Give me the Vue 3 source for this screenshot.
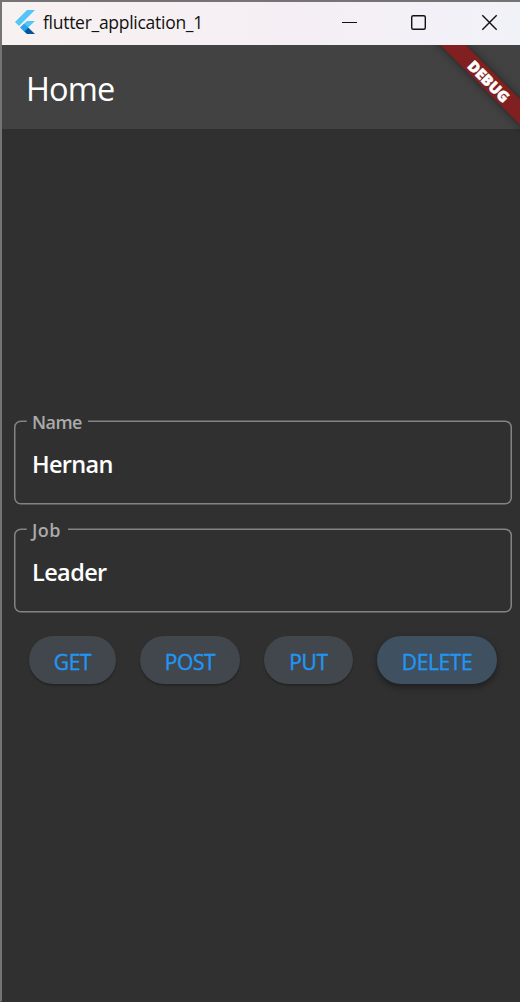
<script setup>
const fields = [
  { label: 'Name', value: 'Hernan', gapEnd: 74, labelClass: 'l-name', valueClass: 'v-hernan' },
  { label: 'Job', value: 'Leader', gapEnd: 54, labelClass: 'l-job', valueClass: 'v-leader' },
]
const outline = (gapEnd) =>
  `M${gapEnd} 1.25H491.25A6 6 0 0 1 497.25 7.25V77.75A6 6 0 0 1 491.25 83.75H6.75A6 6 0 0 1 .75 77.75V7.25A6 6 0 0 1 6.75 1.25H12.8`
const buttons = ['GET', 'POST', 'PUT', 'DELETE']
</script>

<template>
  <div class="window">
    <header class="titlebar">
      <svg class="logo" width="20" height="24" viewBox="0 0 20 24">
        <path d="M12 0H20L4 16L0 12Z" fill="#54c5f8" />
        <path d="M12 11H20L13.2 17.6L9.2 21.6L5.2 17.6Z" fill="#54c5f8" />
        <path d="M5.2 17.6L9.2 13.6L13.2 17.6L9.2 21.6Z" fill="#29a4ec" />
        <path d="M9.2 21.6L13.2 17.6L20 24H12Z" fill="#01579b" />
      </svg>
      <span class="title">flutter_application_1</span>
      <svg class="controls" width="160" height="20" viewBox="0 0 160 20" fill="none" stroke="#111" stroke-width="1.4">
        <path d="M2 9.5H17" stroke-width="1" />
        <rect x="71.7" y="2.7" width="13.6" height="13.6" rx="1.5" />
        <path d="M142.3 2.3L156.7 16.7M156.7 2.3L142.3 16.7" />
      </svg>
    </header>
    <div class="app">
      <div class="appbar"><h1>Home</h1></div>
      <div class="banner">DEBUG</div>
      <main>
        <div v-for="f in fields" :key="f.label" class="field">
          <svg class="outline" width="498" height="85" fill="none" stroke="#838383" stroke-width="1.5">
            <path :d="outline(f.gapEnd)" />
          </svg>
          <label :class="f.labelClass">{{ f.label }}</label>
          <div class="value" :class="f.valueClass">{{ f.value }}</div>
        </div>
        <div class="actions">
          <button v-for="b in buttons" :key="b" :class="b.toLowerCase()">{{ b }}</button>
        </div>
      </main>
    </div>
  </div>
</template>

<style>
body { margin: 0; background: #303030; }
</style>

<style scoped>
.window {
  box-sizing: border-box;
  width: 520px;
  height: 1002px;
  border-left: 2px solid #757373;
  border-top: 2px solid #757373;
  border-bottom: 1px solid #382f33;
  font-family: "Open Sans", "Noto Sans", sans-serif;
  background: #303030;
  overflow: hidden;
}
.titlebar {
  height: 43px;
  display: flex;
  align-items: flex-start;
  background: linear-gradient(90deg, #f8f1f1 0%, #f5eff5 58%, #f1f2f8 100%);
}
.logo { margin: 8px 0 0 13px; flex: none; }
.title {
  margin: 8px 0 0 8px;
  width: 289px;
  font-size: 17.5px;
  line-height: 24px;
  letter-spacing: -0.28px;
  color: #111;
  white-space: nowrap;
}
.controls { margin-top: 11px; margin-left: 8px; flex: none; }
.app { position: relative; height: 956px; overflow: hidden; }
.appbar { height: 84px; background: #424242; display: flex; align-items: center; }
h1 {
  margin: 3px 0 0 24px;
  font-size: 32.5px;
  line-height: 44px;
  letter-spacing: -0.9px;
  font-weight: 400;
  color: #fff;
}
.banner {
  position: absolute;
  left: 397px;
  top: 27px;
  width: 180px;
  height: 18px;
  transform: rotate(45deg);
  background: #802020;
  box-shadow: 0 0 9px rgba(0, 0, 0, 0.5);
  color: #fff;
  text-align: center;
  font-size: 15px;
  font-weight: 900;
  line-height: 18px;
  -webkit-text-stroke: 0.5px #fff;
}
main { padding: 291px 0 0 12px; }
.field { position: relative; height: 84px; width: 498px; margin-bottom: 24px; }
.outline { position: absolute; left: 0; top: 0; }
label {
  position: absolute;
  left: 18px;
  top: -10px;
  font-size: 18px;
  line-height: 24px;
  font-weight: 600;
  color: #aaa;
}
.l-name { letter-spacing: -0.55px; }
.l-job { letter-spacing: 0.4px; }
.value {
  padding: 28px 0 0 18px;
  font-size: 23.5px;
  line-height: 32px;
  font-weight: 600;
  color: #fff;
}
.v-hernan { letter-spacing: -0.7px; }
.v-leader { letter-spacing: -0.6px; }
.actions { display: flex; gap: 24px; padding-left: 15px; }
button {
  height: 48px;
  padding: 4px 0 0;
  border: 0;
  border-radius: 24px;
  background: #42474d;
  color: #2196f3;
  font: 500 21px "Open Sans", "Noto Sans", sans-serif;
  letter-spacing: -0.4px;
  -webkit-text-stroke: 0.4px #2196f3;
  box-shadow: 0 1.5px 2px rgba(0, 0, 0, 0.3);
}
.get { width: 87px; }
.post { width: 100px; }
.put { width: 89px; }
.delete { width: 120px; background: #3f5060; box-shadow: 0 3px 6px rgba(0, 0, 0, 0.4); }
</style>
